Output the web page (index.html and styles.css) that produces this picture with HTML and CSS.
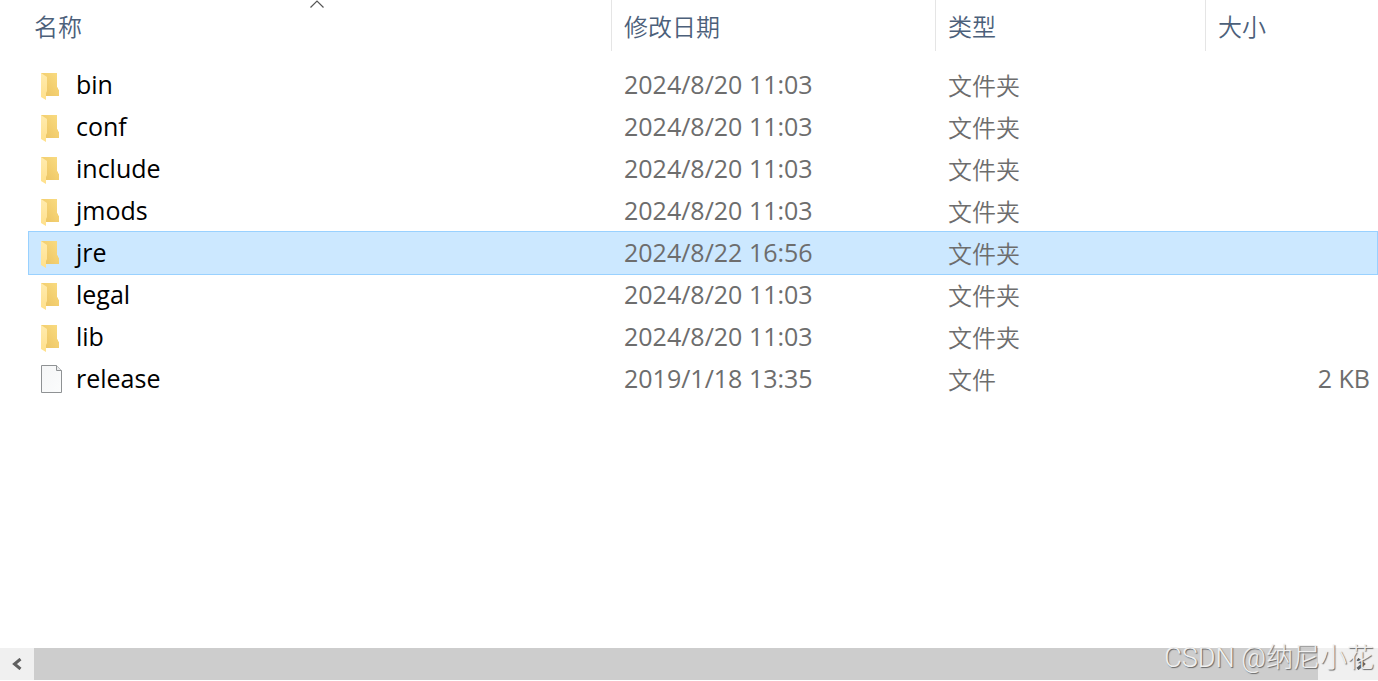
FILE: index.html
```
<!DOCTYPE html>
<html lang="zh-CN">
<head>
    <meta charset="utf-8">
    <title>jdk</title>
    <link rel="stylesheet" href="styles.css">
</head>
<body>
    <svg class="sprite" aria-hidden="true">
        <defs>
            <linearGradient id="back" x1="0" y1="1" x2="1" y2="0">
                <stop offset="0" stop-color="#e9c262"/>
                <stop offset="0.5" stop-color="#f3cf70"/>
                <stop offset="1" stop-color="#f9dc83"/>
            </linearGradient>
            <linearGradient id="flap" x1="0" y1="0" x2="0" y2="1">
                <stop offset="0" stop-color="#ffebae"/>
                <stop offset="1" stop-color="#ffe08b"/>
            </linearGradient>
            <linearGradient id="paper" x1="0" y1="0" x2="1" y2="1">
                <stop offset="0" stop-color="#f5f6f7"/>
                <stop offset="1" stop-color="#fbfcfc"/>
            </linearGradient>
        </defs>
        <symbol id="folder" viewBox="0 -2 24 32">
            <path fill="url(#back)" d="M1 0h16v14l1 1v1l1 1v6H1z"/>
            <path fill="url(#flap)" d="M1 0l6 4v14l-1 2v7l-5-3z"/>
        </symbol>
        <symbol id="file" viewBox="0 0 24 32">
            <path fill="url(#paper)" stroke="#8f9294" d="M1.500 .5h15l5 5v22h-20z"/>
            <path fill="#e9eaeb" stroke="#8f9294" d="M16.500 .5v5h5"/>
        </symbol>
    </svg>

    <main class="files">
        <table>
            <thead>
                <tr>
                    <th class="name" aria-sort="ascending">
                        <button>名称</button>
                        <svg class="sort" width="14" height="8" viewBox="0 0 14 8"><path fill="none" stroke="#555" stroke-width="1.200" d="M.5 7.500L7 1l6.500 6.500"/></svg>
                    </th>
                    <th class="date"><button>修改日期</button></th>
                    <th class="type"><button>类型</button></th>
                    <th class="size"><button>大小</button></th>
                </tr>
            </thead>
            <tbody>
                <tr><td class="name"><svg class="icon"><use href="#folder"/></svg>bin</td><td>2024/8/20 11:03</td><td class="type">文件夹</td><td class="size"></td></tr>
                <tr><td class="name"><svg class="icon"><use href="#folder"/></svg>conf</td><td>2024/8/20 11:03</td><td class="type">文件夹</td><td class="size"></td></tr>
                <tr><td class="name"><svg class="icon"><use href="#folder"/></svg>include</td><td>2024/8/20 11:03</td><td class="type">文件夹</td><td class="size"></td></tr>
                <tr><td class="name"><svg class="icon"><use href="#folder"/></svg>jmods</td><td>2024/8/20 11:03</td><td class="type">文件夹</td><td class="size"></td></tr>
                <tr class="selected"><td class="name"><svg class="icon"><use href="#folder"/></svg>jre</td><td>2024/8/22 16:56</td><td class="type">文件夹</td><td class="size"></td></tr>
                <tr><td class="name"><svg class="icon"><use href="#folder"/></svg>legal</td><td>2024/8/20 11:03</td><td class="type">文件夹</td><td class="size"></td></tr>
                <tr><td class="name"><svg class="icon"><use href="#folder"/></svg>lib</td><td>2024/8/20 11:03</td><td class="type">文件夹</td><td class="size"></td></tr>
                <tr><td class="name"><svg class="icon"><use href="#file"/></svg>release</td><td>2019/1/18 13:35</td><td class="type">文件</td><td class="size">2 KB</td></tr>
            </tbody>
        </table>
    </main>

    <div class="scrollbar">
        <button aria-label="向左滚动"><svg width="10" height="12" viewBox="0 0 10 12"><path fill="none" stroke="#606060" stroke-width="3" d="M8.500 1L2.500 6l6 5"/></svg></button>
        <div class="thumb"></div>
        <button aria-label="向右滚动"><svg width="10" height="12" viewBox="0 0 10 12"><path fill="none" stroke="#606060" stroke-width="3" d="M1.500 1L7.500 6l-6 5"/></svg></button>
    </div>
    <div class="watermark">CSDN @纳尼小花</div>
</body>
</html>
```
FILE: styles.css
```
body{
    margin: 0;
    min-height: 100vh;
    display: flex;
    flex-direction: column;
    position: relative;
    background-color: #fff;
    font-family: "Open Sans", "Noto Sans CJK SC", sans-serif;
    font-size: 25px;
    color: #6d6d6d;
}
button{
    margin: 0;
    padding: 0;
    border: none;
    background: none;
    font: inherit;
    color: inherit;
}
.sprite{
    position: absolute;
    width: 0;
    height: 0;
}
.files{
    flex: 1;
    padding: 0 1px 0 29px;
}
table{
    width: 100%;
    table-layout: fixed;
    border-collapse: separate;
    border-spacing: 0;
}
th{
    position: relative;
    height: 51px;
    padding: 0 0 0 12px;
    box-sizing: border-box;
    border-right: 1px solid #e5e5e5;
    text-align: left;
    font-family: "Noto Sans CJK SC", sans-serif;
    font-size: 24px;
    font-weight: 350;
    line-height: 32px;
    color: #4c607a;
}
th.name{
    width: 583px;
    padding-left: 5px;
}
th.date{
    width: 324px;
}
th.type{
    width: 270px;
}
th.size{
    border-right: none;
}
.sort{
    position: absolute;
    top: 0;
    left: 281px;
}
/* space between the header and the first row */
tbody::before{
    content: "";
    display: table-row;
    height: 13px;
}
td{
    height: 42px;
    padding: 0 0 2px 12px;
    box-sizing: border-box;
    line-height: 34px;
    white-space: nowrap;
}
td.name{
    padding: 2px 0 0 11px;
    color: #000;
}
td.type{
    padding-bottom: 0;
    font-family: "Noto Sans CJK SC", sans-serif;
    font-size: 24px;
    font-weight: 350;
}
td.size{
    padding-right: 7px;
    text-align: right;
}
.icon{
    width: 24px;
    height: 32px;
    margin: 0 12px 2px 0;
    vertical-align: middle;
}
.selected{
    background-color: #cce8ff;
    outline: 1px solid #99d1ff;
}
.scrollbar{
    display: flex;
    height: 32px;
    margin-bottom: 1px;
    background-color: #f0f0f0;
}
.scrollbar button{
    width: 34px;
    display: flex;
    align-items: center;
    justify-content: center;
}
.thumb{
    flex: 1;
    margin-right: 26px;
    background-color: #cdcdcd;
}
.watermark{
    position: absolute;
    right: 4px;
    bottom: 5px;
    font-family: Roboto, "Noto Sans CJK SC", sans-serif;
    font-size: 27px;
    font-weight: 300;
    line-height: 36px;
    color: #f0f0f0;
    text-shadow: 1px 1px 1px #666;
}
```
